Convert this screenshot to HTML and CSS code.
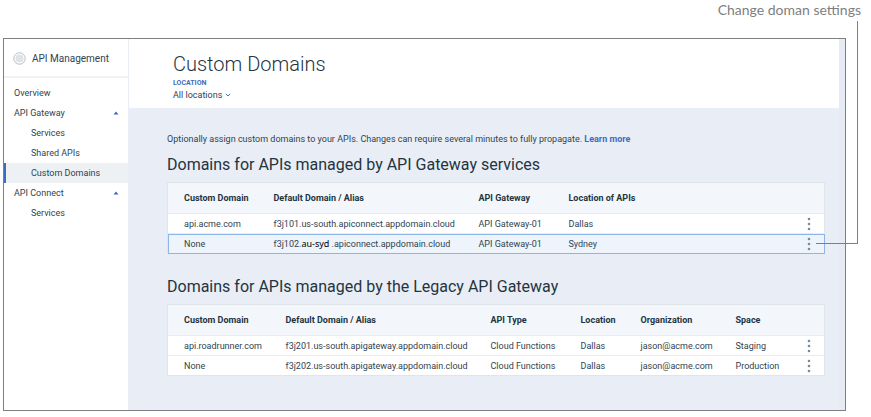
FILE: index.html
```html
<!DOCTYPE html>
<html lang="en">
<head>
<meta charset="utf-8">
<title>API Management - Custom Domains</title>
<link rel="stylesheet" href="styles.css">
</head>
<body>
<svg class="sprite" aria-hidden="true">
  <symbol id="dots" viewBox="0 0 4 14"><circle cx="2" cy="2" r="1.300"/><circle cx="2" cy="7" r="1.300"/><circle cx="2" cy="12" r="1.300"/></symbol>
  <symbol id="caret" viewBox="0 0 6 4"><path d="M.5 3.500 3 .5 5.500 3.500Z"/></symbol>
</svg>
<p class="callout">Change doman settings</p>
<div class="connector"></div>
<div class="frame">
  <aside class="sidebar">
    <div class="brand">
      <svg class="brand-icon" viewBox="0 0 13 13" aria-hidden="true"><circle cx="6.500" cy="6.500" r="5.700" fill="#fff" stroke="#b4bcc3"/><circle cx="6.500" cy="6.500" r="4" fill="#dfe3e6"/></svg>
      <span>API Management</span>
    </div>
    <nav class="nav">
      <a href="#">Overview</a>
      <a href="#">API Gateway<svg class="caret" aria-hidden="true"><use href="#caret"/></svg></a>
      <a href="#" class="sub">Services</a>
      <a href="#" class="sub">Shared APIs</a>
      <a href="#" class="sub active">Custom Domains</a>
      <a href="#">API Connect<svg class="caret" aria-hidden="true"><use href="#caret"/></svg></a>
      <a href="#" class="sub">Services</a>
    </nav>
  </aside>
  <main class="main">
    <header class="header">
      <h1>Custom Domains</h1>
      <label for="location">LOCATION</label>
      <div class="picker">
        <select id="location"><option>All locations</option></select>
        <svg class="chevron" viewBox="0 0 6 4" aria-hidden="true"><path d="M.8.800 3 3 5.200.800"/></svg>
      </div>
    </header>
    <div class="content">
      <p class="intro">Optionally assign custom domains to your APIs. Changes can require several minutes to fully propagate. <a href="#">Learn more</a></p>
      <section>
        <h2>Domains for APIs managed by API Gateway services</h2>
        <table>
          <colgroup><col class="w-domain"><col class="w-alias"><col class="w-gateway"><col><col class="w-menu"></colgroup>
          <thead><tr><th>Custom Domain</th><th>Default Domain / Alias</th><th>API Gateway</th><th>Location of APIs</th><th></th></tr></thead>
          <tbody>
            <tr><td>api.acme.com</td><td>f3j101.us-south.apiconnect.appdomain.cloud</td><td>API Gateway-01</td><td>Dallas</td><td><button aria-label="Domain settings"><svg><use href="#dots"/></svg></button></td></tr>
            <tr class="selected"><td>None</td><td>f3j102.<span class="region">au-syd</span> .apiconnect.appdomain.cloud</td><td>API Gateway-01</td><td>Sydney</td><td><button aria-label="Domain settings"><svg><use href="#dots"/></svg></button></td></tr>
          </tbody>
        </table>
      </section>
      <section>
        <h2>Domains for APIs managed by the Legacy API Gateway</h2>
        <table>
          <colgroup><col class="w-legacy"><col class="w-alias"><col class="w-gateway"><col class="w-location"><col class="w-org"><col><col class="w-menu"></colgroup>
          <thead><tr><th>Custom Domain</th><th>Default Domain / Alias</th><th>API Type</th><th>Location</th><th>Organization</th><th>Space</th><th></th></tr></thead>
          <tbody>
            <tr><td>api.roadrunner.com</td><td>f3j201.us-south.apigateway.appdomain.cloud</td><td>Cloud Functions</td><td>Dallas</td><td>jason@acme.com</td><td>Staging</td><td><button aria-label="Domain settings"><svg><use href="#dots"/></svg></button></td></tr>
            <tr><td>None</td><td>f3j202.us-south.apigateway.appdomain.cloud</td><td>Cloud Functions</td><td>Dallas</td><td>jason@acme.com</td><td>Production</td><td><button aria-label="Domain settings"><svg><use href="#dots"/></svg></button></td></tr>
          </tbody>
        </table>
      </section>
    </div>
  </main>
</div>
</body>
</html>
```
FILE: styles.css
```css
* { box-sizing: border-box; }
body {
  margin: 0;
  min-height: 100vh;
  display: flex;
  flex-direction: column;
  padding: 0 25px 6px 3px;
  position: relative;
  background: #fff;
  color: #31434f;
  font: 9px/12px Roboto, "Noto Sans", sans-serif;
}
h1, h2, p { margin: 0; }
a { color: inherit; text-decoration: none; }
.sprite { position: absolute; width: 0; height: 0; }

.callout {
  height: 38px;
  margin-right: -15px;
  text-align: right;
  font: 14px/19px Lato, "Open Sans", sans-serif;
  color: #808080;
}
.connector {
  position: absolute;
  z-index: 1;
  top: 21px;
  right: 13px;
  width: 42px;
  height: 223px;
  border: solid #7f7f7f;
  border-width: 0 1px 1px 0;
  pointer-events: none;
}
.frame {
  flex: 1;
  display: flex;
  border: 1px solid #7f7f7f;
}

.sidebar { width: 125px; border-right: 1px solid #e9edf4; }
.brand {
  display: flex;
  align-items: center;
  gap: 6px;
  height: 39px;
  padding: 2px 0 0 9px;
  border-bottom: 2px solid #eff1f3;
  font-size: 10px;
}
.brand-icon { width: 13px; height: 13px; }
.nav { display: flex; flex-direction: column; padding-top: 5px; }
.nav a {
  display: flex;
  align-items: center;
  justify-content: space-between;
  height: 20px;
  padding: 0 9px 0 10px;
}
.nav .sub { padding-left: 27px; }
.nav .active {
  background: #eef1f4;
  border-left: 2px solid #3c6dc0;
  padding-left: 25px;
}
.caret { width: 6px; height: 4px; fill: #3c6dc0; }

.main {
  flex: 1;
  background: #e9eef6;
  border-right: 6px solid #e7ebf5;
}
.header {
  height: 69px;
  padding: 12px 44px 0;
  background: #fff;
}
h1 { font-size: 20px; line-height: 26px; font-weight: 300; color: #24343f; }
label {
  display: block;
  font-size: 7px;
  line-height: 12px;
  font-weight: 700;
  color: #3c6dc0;
}
.picker { display: flex; align-items: center; gap: 2px; }
select {
  appearance: none;
  margin: 0;
  padding: 0;
  border: 0;
  background: none;
  color: inherit;
  font: inherit;
}
.chevron { width: 6px; height: 4px; fill: none; stroke: #3c6dc0; }

.content { padding: 25px 14px 34px 38px; }
.intro a { color: #3c6dc0; font-weight: 700; }
section { padding-top: 7px; }
section + section { padding-top: 20px; }
h2 {
  font-size: 16px;
  line-height: 26px;
  font-weight: 400;
  margin-bottom: 4px;
  color: #24343f;
}
table {
  width: 100%;
  table-layout: fixed;
  border-collapse: collapse;
  border: 1px solid #e0e5ea;
  background: #fff;
}
th, td { padding: 0; text-align: left; white-space: nowrap; }
th:first-child, td:first-child { padding-left: 16px; }
th { height: 31px; background: #f3f7fb; color: #24343f; }
td { height: 20px; border-top: 1px solid #e8ecf0; }
.selected { outline: 1px solid #8fb5e8; outline-offset: -1px; background: #edf4fc; }
.region { color: #000; font-family: "Noto Sans", sans-serif; }
.w-domain { width: 106px; }
.w-legacy { width: 118px; }
.w-alias { width: 205px; }
.w-gateway { width: 90px; }
.w-location { width: 60px; }
.w-org { width: 95px; }
.w-menu { width: 18px; }
button {
  display: block;
  padding: 0;
  border: 0;
  background: none;
}
button svg { display: block; width: 4px; height: 14px; fill: #7a8b99; }
```
